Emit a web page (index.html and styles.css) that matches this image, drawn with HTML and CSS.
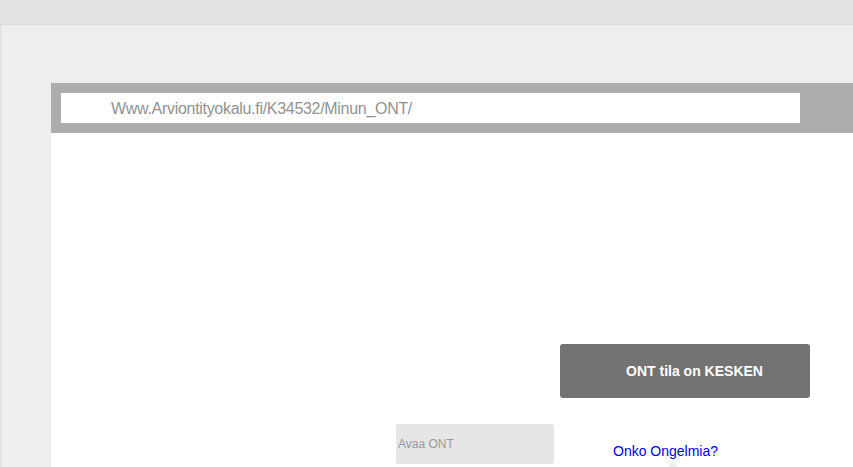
FILE: index.html
```html
<!DOCTYPE html>
<html lang="fi">
<head>
<meta charset="utf-8">
<title>ONT</title>
<link rel="stylesheet" href="styles.css">
</head>
<body>
<header class="topbar"></header>
<main class="stage">
  <section class="panel">
    <div class="addressbar">
      <div class="address">Www.Arviontityokalu.fi/K34532/Minun_ONT/</div>
    </div>
    <div class="content">
      <div class="status-row">
        <div class="status">ONT tila on KESKEN</div>
      </div>
      <div class="action-row">
        <button class="open-btn" type="button">Avaa ONT</button>
        <div class="help">
          <a class="help-link" href="#">Onko Ongelmia?</a>
          <span class="help-arrow"></span>
        </div>
      </div>
    </div>
  </section>
</main>
</body>
</html>
```
FILE: styles.css
```css
html, body {
  margin: 0;
  padding: 0;
  height: 100%;
  overflow: hidden;
}
body {
  font-family: "Liberation Sans", Arial, sans-serif;
  background: #eeeeee;
  display: flex;
  flex-direction: column;
}
.topbar {
  height: 24px;
  background: #e4e4e4;
  border-bottom: 1px solid #dadada;
  flex: none;
}
.stage {
  flex: 1;
  background: #eeeeee;
  border-left: 2px solid #e4e4e4;
  padding: 58px 0 0 49px;
  display: flex;
  flex-direction: column;
}
.panel {
  flex: 1;
  display: flex;
  flex-direction: column;
  background: #ffffff;
}
.addressbar {
  background: #adadad;
  padding: 10px 0 10px 10px;
}
.address {
  width: 689px;
  height: 30px;
  background: #ffffff;
  padding-left: 50px;
  font-size: 16px;
  letter-spacing: -0.3px;
  line-height: 31px;
  color: #929292;
  white-space: nowrap;
}
.content {
  flex: 1;
  padding-top: 211px;
  display: flex;
  flex-direction: column;
}
.status-row {
  display: flex;
  padding-left: 509px;
}
.status {
  width: 250px;
  height: 54px;
  box-sizing: border-box;
  padding-left: 19px;
  background: #737373;
  border-radius: 3px;
  color: #ffffff;
  font-weight: bold;
  font-size: 14px;
  display: flex;
  align-items: center;
  justify-content: center;
}
.action-row {
  display: flex;
  align-items: flex-start;
  padding: 26px 0 0 345px;
}
.open-btn {
  width: 158px;
  height: 40px;
  border: none;
  border-radius: 3px;
  background: #e6e6e6;
  color: #999999;
  font-family: "Liberation Sans", Arial, sans-serif;
  font-size: 12px;
  text-align: left;
  padding: 0 0 0 2px;
  margin: 0;
}
.help {
  position: relative;
  margin-left: 59px;
  padding-top: 18px;
}
.help-link {
  color: #0000ee;
  font-size: 14px;
  text-decoration: none;
  line-height: 17px;
}
.help-arrow {
  position: absolute;
  left: 54px;
  top: 38px;
  width: 0;
  height: 0;
  border-left: 6px solid transparent;
  border-right: 6px solid transparent;
  border-bottom: 6px solid #eeeeee;
}
```
